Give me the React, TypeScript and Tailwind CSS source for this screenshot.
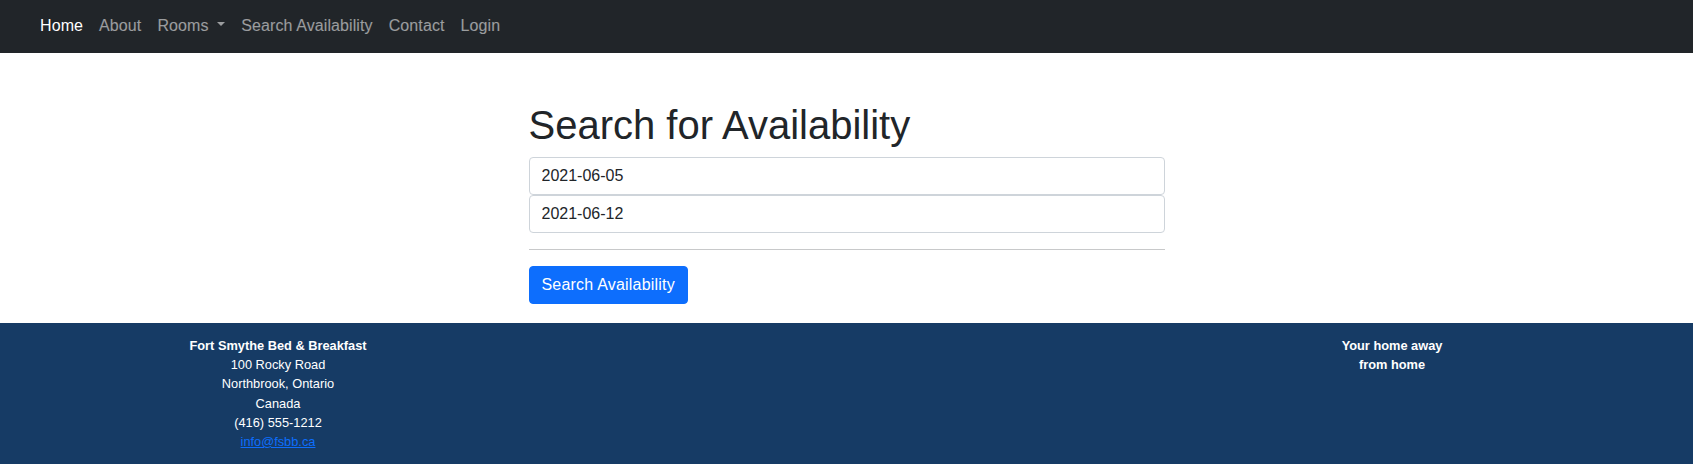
const navLinks = [
    { label: "Home", active: true },
    { label: "About" },
    { label: "Rooms", dropdown: true },
    { label: "Search Availability" },
    { label: "Contact" },
    { label: "Login" },
];

function Navbar() {
    return (
        <nav className="bg-[#212529] h-[53px] flex items-center pl-[32px] pb-[2px]">
            <ul className="flex">
                {navLinks.map((link) => (
                    <li key={link.label}>
                        <a
                            href="#"
                            className={`block px-2 leading-6 text-base tracking-[0.1px] ${link.active ? "text-white" : "text-white/55"}`}
                        >
                            {link.label}
                            {link.dropdown && (
                                <>
                                    {" "}
                                    <span className="inline-block ml-[0.255em] align-[0.255em] border-t-[0.3em] border-x-[0.3em] border-t-current border-x-transparent border-b-0" />
                                </>
                            )}
                        </a>
                    </li>
                ))}
            </ul>
        </nav>
    );
}

function SearchForm() {
    return (
        <div className="w-[636px] mx-auto">
            <h1 className="mt-[48px] mb-2 text-[40px] leading-[1.2] font-medium text-[#212529]">Search for Availability</h1>

            <div className="flex flex-col">
                <input
                    type="text"
                    defaultValue="2021-06-05"
                    className="h-[38px] w-full border border-[#ced4da] rounded-[4px] px-3 text-base text-[#212529] outline-none"
                />
                <input
                    type="text"
                    defaultValue="2021-06-12"
                    className="h-[38px] w-full border border-[#ced4da] rounded-[4px] px-3 text-base text-[#212529] outline-none"
                />
            </div>

            <hr className="my-4 border-t border-[#c8c9ca]" />

            <button className="h-[38px] px-3 border border-[#0d6efd] bg-[#0d6efd] text-white text-base tracking-[0.2px] rounded-[4px]">
                Search Availability
            </button>
        </div>
    );
}

function Footer() {
    return (
        <footer className="mt-[19px] bg-[#163b65] text-white text-[12.8px] leading-[1.5] py-[13px] flex">
            <div className="w-[556px] text-center">
                <strong>Fort Smythe Bed &amp; Breakfast</strong>
                <br />
                100 Rocky Road
                <br />
                Northbrook, Ontario
                <br />
                Canada
                <br />
                (416) 555-1212
                <br />
                <a href="#" className="text-[#0d6efd] underline">info@fsbb.ca</a>
            </div>
            <div className="flex-1" />
            <div className="w-[602px] text-center font-bold">
                Your home away
                <br />
                from home
            </div>
        </footer>
    );
}

export default function App() {
    return (
        <div className="min-h-[470px] bg-white font-['Liberation_Sans',Arial,sans-serif]">
            <Navbar />
            <SearchForm />
            <Footer />
        </div>
    );
}
